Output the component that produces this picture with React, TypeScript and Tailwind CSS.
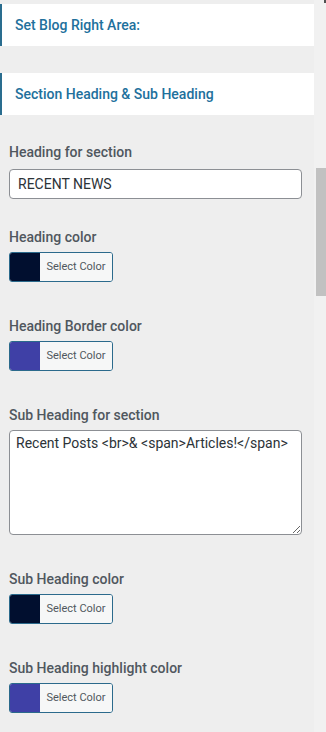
const fields = [
  { kind: 'input', label: 'Heading for section', value: 'RECENT NEWS' },
  { kind: 'color', label: 'Heading color', color: '#010f2f' },
  { kind: 'color', label: 'Heading Border color', color: '#3f40a6' },
  { kind: 'textarea', label: 'Sub Heading for section', value: 'Recent Posts <br>& <span>Articles!</span>' },
  { kind: 'color', label: 'Sub Heading color', color: '#010f2f' },
  { kind: 'color', label: 'Sub Heading highlight color', color: '#3f40a6' },
];

function SectionTitle({ text, className }: { text: string; className?: string }) {
  return (
    <div className={`flex h-[42px] items-center border-l-2 border-[#2a6d8f] bg-white pl-[13px] ${className ?? ''}`}>
      <span className="text-[14px] font-medium text-[#21709c]">{text}</span>
    </div>
  );
}

function ColorPicker({ color }: { color: string }) {
  return (
    <div className="flex h-[30px] w-[104px] overflow-hidden rounded-[3px] border border-[#2b6a8c]">
      <div className="w-[30px]" style={{ backgroundColor: color }} />
      <div className="flex flex-1 items-center justify-center bg-[#f6f7f7] text-[11px] text-[#50575e]">
        Select Color
      </div>
    </div>
  );
}

export default function App() {
  return (
    <div className="flex h-[732px] w-[326px] overflow-hidden bg-[#eeeeee] font-['Roboto',sans-serif]">
      <div className="w-[314px]">
        <SectionTitle text="Set Blog Right Area:" className="mt-[4px]" />
        <SectionTitle text="Section Heading & Sub Heading" className="mt-[27px]" />

        <div className="px-[9px] pt-[27px]">
          {fields.map((f) => (
            <div key={f.label} className={f.kind === 'input' ? 'mb-[28px]' : 'mb-[34px]'}>
              <label className="block h-[20px] text-[14px] leading-[20px] font-medium text-[#50575e]">{f.label}</label>
              {f.kind === 'input' && (
                <input
                  readOnly
                  value={f.value}
                  className="mt-[7px] h-[30px] w-[293px] rounded-[4px] border border-[#8c8f94] bg-white px-[8px] text-[14px] text-[#2c3338] outline-none"
                />
              )}
              {f.kind === 'textarea' && (
                <textarea
                  readOnly
                  value={f.value}
                  className="mt-[5px] block h-[105px] w-[293px] rounded-[4px] border border-[#8c8f94] bg-white px-[6px] pt-[2px] text-[14px] leading-[20px] text-[#2c3338] outline-none"
                />
              )}
              {f.kind === 'color' && (
                <div className="mt-[5px]">
                  <ColorPicker color={f.color!} />
                </div>
              )}
            </div>
          ))}
        </div>
      </div>

      {/* scrollbar */}
      <div className="relative w-[12px] bg-[#f1f1f1]">
        <div className="ml-[10px] h-[3px] w-[2px] bg-[#505050]" />
        <div className="mt-[165px] ml-[2px] h-[128px] w-[10px] bg-[#c1c1c1]" />
      </div>
    </div>
  );
}
